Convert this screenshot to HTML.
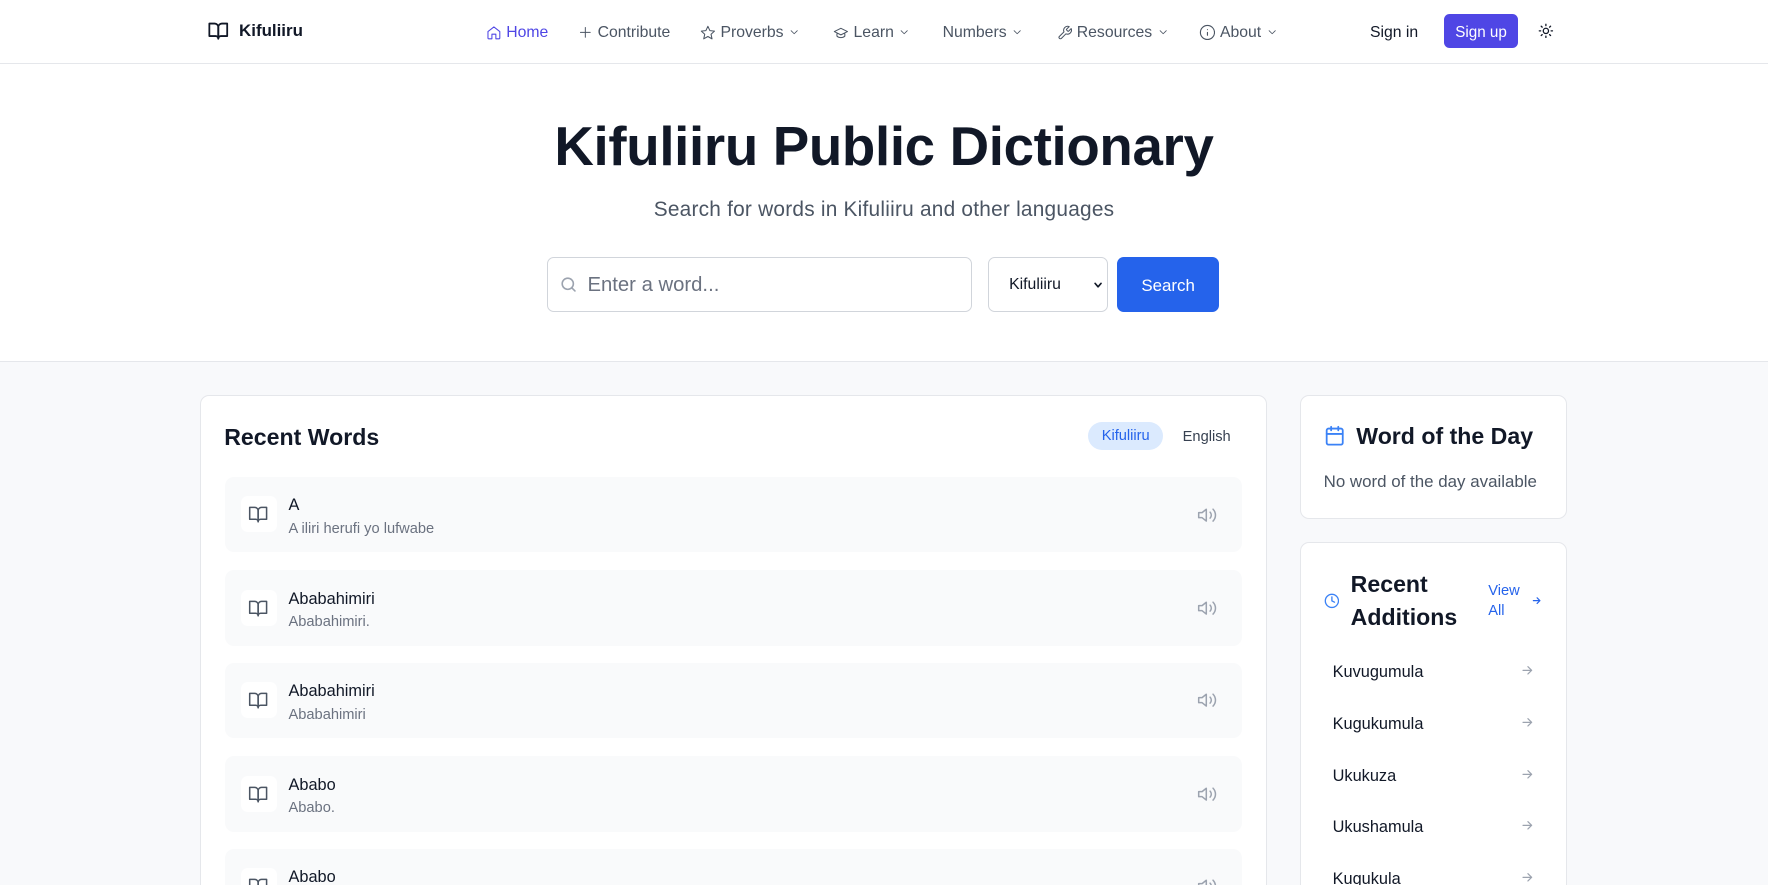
<!DOCTYPE html>
<html><head><meta charset="utf-8"><style>
*{box-sizing:border-box;margin:0;padding:0}
html,body{width:1768px;height:885px;overflow:hidden;background:#fff}
#root{zoom:1.12755;width:1568px;height:785px;position:relative;font-family:"Liberation Sans",sans-serif;color:#111827;background:#f8f9fb;overflow:hidden}
.abs{position:absolute}
nav{position:absolute;left:0;top:0;width:1568px;height:57px;background:#fff;border-bottom:1px solid #e5e7eb}
.nl{position:absolute;top:21px;font-size:14px;color:#4b5563;display:flex;align-items:center;gap:4px;white-space:nowrap}
.nl svg{stroke:currentColor;fill:none;stroke-width:1.6;stroke-linecap:round;stroke-linejoin:round}
.hero{position:absolute;left:0;top:57px;width:1568px;height:264px;background:#fff;border-bottom:1px solid #e5e7eb}
.card{position:absolute;background:#fff;border:1px solid #e5e7eb;border-radius:8px}
.row{position:absolute;left:22px;width:902px;height:67px;background:#f9fafb;border-radius:8px}
.ib{position:absolute;left:14px;top:17px;width:32px;height:32px;background:#fff;border-radius:6px}
.w{position:absolute;left:56px;top:17px;font-size:14.5px;color:#111827}
.s{position:absolute;left:56px;top:39px;font-size:13px;color:#6b7280}
.ra{position:absolute;left:28px;font-size:14.5px;color:#111827}
.arr{position:absolute;left:194px}
svg.ic{fill:none;stroke-linecap:round;stroke-linejoin:round}
</style></head><body><div id="root">
<nav>
 <svg class="abs ic" style="left:184px;top:18px" width="20" height="19" viewBox="0 0 24 24" stroke="#111827" stroke-width="2"><path d="M2 4h6a4 4 0 0 1 4 4v13a3 3 0 0 0-3-3H2z"/><path d="M22 4h-6a4 4 0 0 0-4 4v13a3 3 0 0 1 3-3h7z"/></svg>
 <div class="abs" style="left:212px;top:19px;font-size:15px;font-weight:bold">Kifuliiru</div>
 <div class="nl" style="left:431px;color:#4f46e5"><svg width="14" height="14" viewBox="0 0 24 24"><path d="M3 10l9-7 9 7v10a1 1 0 0 1-1 1h-5v-7H9v7H4a1 1 0 0 1-1-1z"/></svg>Home</div>
 <div class="nl" style="left:513px"><svg width="13" height="13" viewBox="0 0 24 24"><path d="M12 4v16M4 12h16"/></svg>Contribute</div>
 <div class="nl" style="left:621px"><svg width="14" height="14" viewBox="0 0 24 24"><path d="M12 2l3 6.5 7 .8-5.2 4.8 1.5 7L12 17.5 5.7 21l1.5-7L2 9.3l7-.8z"/></svg>Proverbs <svg width="11" height="11" viewBox="0 0 24 24"><path d="M6 9l6 6 6-6"/></svg></div>
 <div class="nl" style="left:739px"><svg width="14" height="14" viewBox="0 0 24 24"><path d="M22 10L12 5 2 10l10 5 10-5zM6 12v5c3 3 9 3 12 0v-5"/></svg>Learn <svg width="11" height="11" viewBox="0 0 24 24"><path d="M6 9l6 6 6-6"/></svg></div>
 <div class="nl" style="left:836px">Numbers <svg width="11" height="11" viewBox="0 0 24 24"><path d="M6 9l6 6 6-6"/></svg></div>
 <div class="nl" style="left:937px"><svg width="14" height="14" viewBox="0 0 24 24"><path d="M14.7 6.3a1 1 0 0 0 0 1.4l1.6 1.6a1 1 0 0 0 1.4 0l3.8-3.8a6 6 0 0 1-7.9 7.9l-6.9 6.9a2.1 2.1 0 0 1-3-3l6.9-6.9a6 6 0 0 1 7.9-7.9z"/></svg>Resources <svg width="11" height="11" viewBox="0 0 24 24"><path d="M6 9l6 6 6-6"/></svg></div>
 <div class="nl" style="left:1063px"><svg width="15" height="15" viewBox="0 0 24 24"><circle cx="12" cy="12" r="10"/><path d="M12 16v-4M12 8h0"/></svg>About <svg width="11" height="11" viewBox="0 0 24 24"><path d="M6 9l6 6 6-6"/></svg></div>
 <div class="abs" style="left:1215px;top:21px;font-size:14px;color:#111827">Sign in</div>
 <div class="abs" style="left:1281px;top:12px;width:65px;height:31px;background:#4f46e5;border-radius:5px;color:#fff;font-size:13.5px;text-align:center;line-height:33px">Sign up</div>
 <svg class="abs ic" style="left:1364px;top:20px" width="14" height="14" viewBox="0 0 24 24" stroke="#111827" stroke-width="2"><circle cx="12" cy="12" r="4"/><path d="M12 2v2M12 20v2M4.9 4.9l1.4 1.4M17.7 17.7l1.4 1.4M2 12h2M20 12h2M4.9 19.1l1.4-1.4M17.7 6.3l1.4-1.4"/></svg>
</nav>
<div class="hero">
 <div class="abs" style="left:0;width:1568px;top:44px;text-align:center;font-size:48.5px;font-weight:bold;letter-spacing:-0.3px;color:#111827">Kifuliiru Public Dictionary</div>
 <div class="abs" style="left:0;width:1568px;top:119px;text-align:center;font-size:18.5px;letter-spacing:0.2px;color:#4b5563">Search for words in Kifuliiru and other languages</div>
 <div class="abs" style="left:485px;top:171px;width:377px;height:49px;border:1px solid #d1d5db;border-radius:6px"></div>
 <svg class="abs ic" style="left:496px;top:187px" width="17" height="17" viewBox="0 0 24 24" stroke="#9ca3af" stroke-width="2"><circle cx="11" cy="11" r="7"/><path d="M20 20l-4-4"/></svg>
 <div class="abs" style="left:521px;top:186px;font-size:18px;color:#6b7280">Enter a word...</div>
 <div class="abs" style="left:876px;top:171px;width:107px;height:49px;border:1px solid #d1d5db;border-radius:6px"></div>
 <div class="abs" style="left:895px;top:188px;font-size:14px;color:#111827">Kifuliiru</div>
 <svg class="abs ic" style="left:969px;top:191px" width="9" height="9" viewBox="0 0 24 24" stroke="#111827" stroke-width="4"><path d="M5 8l7 8 7-8"/></svg>
 <div class="abs" style="left:991px;top:171px;width:90px;height:49px;background:#2563eb;border-radius:6px;color:#fff;font-size:15px;text-align:center;line-height:51px">Search</div>
</div>
<div class="card" style="left:177px;top:350px;width:947px;height:460px">
 <div class="abs" style="left:21px;top:25px;font-size:20.5px;font-weight:bold">Recent Words</div>
 <div class="abs" style="left:787px;top:23px;width:67px;height:25px;background:#dbeafe;border-radius:13px;color:#2563eb;font-size:13px;text-align:center;line-height:26px">Kifuliiru</div>
 <div class="abs" style="left:871px;top:30px;font-size:13px;color:#374151">English</div>
 <div class="row" style="top:72px"><div class="ib"></div><div class="w">A</div><div class="s">A iliri herufi yo lufwabe</div></div>
 <div class="row" style="top:155px"><div class="ib"></div><div class="w">Ababahimiri</div><div class="s">Ababahimiri.</div></div>
 <div class="row" style="top:237px"><div class="ib"></div><div class="w">Ababahimiri</div><div class="s">Ababahimiri</div></div>
 <div class="row" style="top:320px"><div class="ib"></div><div class="w">Ababo</div><div class="s">Ababo.</div></div>
 <div class="row" style="top:402px"><div class="ib"></div><div class="w">Ababo</div><div class="s"></div></div>
</div>
<svg width="0" height="0" style="position:absolute"><defs>
<symbol id="bk" viewBox="0 0 24 24"><path d="M2 4h6a4 4 0 0 1 4 4v13a3 3 0 0 0-3-3H2z"/><path d="M22 4h-6a4 4 0 0 0-4 4v13a3 3 0 0 1 3-3h7z"/></symbol>
<symbol id="spk" viewBox="0 0 24 24"><path d="M11 5L6 9H2v6h4l5 4z"/><path d="M15.5 8.5a5 5 0 0 1 0 7M19 5a10 10 0 0 1 0 14"/></symbol>
<symbol id="ar" viewBox="0 0 24 24"><path d="M5 12h14M13 6l6 6-6 6"/></symbol>
</defs></svg>
<div class="card" style="left:1153px;top:350px;width:237px;height:110px">
 <svg class="abs ic" style="left:20px;top:26px" width="19" height="19" viewBox="0 0 24 24" stroke="#3b82f6" stroke-width="2"><rect x="3" y="4" width="18" height="18" rx="2"/><path d="M16 2v4M8 2v4M3 10h18"/></svg>
 <div class="abs" style="left:49px;top:24px;font-size:20.5px;font-weight:bold">Word of the Day</div>
 <div class="abs" style="left:20px;top:68px;font-size:15px;color:#4b5563">No word of the day available</div>
</div>
<div class="card" style="left:1153px;top:481px;width:237px;height:340px">
 <svg class="abs ic" style="left:20px;top:44px" width="14" height="14" viewBox="0 0 24 24" stroke="#3b82f6" stroke-width="2"><circle cx="12" cy="12" r="10"/><path d="M12 6v6l4 2"/></svg>
 <div class="abs" style="left:44px;top:22px;font-size:20.5px;font-weight:bold;line-height:29px">Recent<br>Additions</div>
 <div class="abs" style="left:166px;top:33px;font-size:13px;color:#2563eb;line-height:18px">View<br>All</div>
 <svg class="abs ic" style="left:204px;top:46px" width="10" height="10" viewBox="0 0 24 24" stroke="#2563eb" stroke-width="2.5"><use href="#ar"/></svg>
 <div class="ra" style="top:106px">Kuvugumula</div>
 <div class="ra" style="top:152px">Kugukumula</div>
 <div class="ra" style="top:198px">Ukukuza</div>
 <div class="ra" style="top:244px">Ukushamula</div>
 <div class="ra" style="top:290px">Kugukula</div>
 <svg class="arr ic" style="top:106px" width="13" height="13" stroke="#9ca3af" stroke-width="2"><use href="#ar"/></svg>
 <svg class="arr ic" style="top:152px" width="13" height="13" stroke="#9ca3af" stroke-width="2"><use href="#ar"/></svg>
 <svg class="arr ic" style="top:198px" width="13" height="13" stroke="#9ca3af" stroke-width="2"><use href="#ar"/></svg>
 <svg class="arr ic" style="top:244px" width="13" height="13" stroke="#9ca3af" stroke-width="2"><use href="#ar"/></svg>
 <svg class="arr ic" style="top:290px" width="13" height="13" stroke="#9ca3af" stroke-width="2"><use href="#ar"/></svg>
</div>
<svg class="abs ic" style="left:220px;top:447px" width="18" height="18" stroke="#4b5563" stroke-width="1.8"><use href="#bk"/></svg>
<svg class="abs ic" style="left:220px;top:530px" width="18" height="18" stroke="#4b5563" stroke-width="1.8"><use href="#bk"/></svg>
<svg class="abs ic" style="left:220px;top:612px" width="18" height="18" stroke="#4b5563" stroke-width="1.8"><use href="#bk"/></svg>
<svg class="abs ic" style="left:220px;top:695px" width="18" height="18" stroke="#4b5563" stroke-width="1.8"><use href="#bk"/></svg>
<svg class="abs ic" style="left:220px;top:777px" width="18" height="18" stroke="#4b5563" stroke-width="1.8"><use href="#bk"/></svg>
<svg class="abs ic" style="left:1062px;top:448px" width="18" height="18" stroke="#9ca3af" stroke-width="1.8"><use href="#spk"/></svg>
<svg class="abs ic" style="left:1062px;top:530px" width="18" height="18" stroke="#9ca3af" stroke-width="1.8"><use href="#spk"/></svg>
<svg class="abs ic" style="left:1062px;top:612px" width="18" height="18" stroke="#9ca3af" stroke-width="1.8"><use href="#spk"/></svg>
<svg class="abs ic" style="left:1062px;top:695px" width="18" height="18" stroke="#9ca3af" stroke-width="1.8"><use href="#spk"/></svg>
<svg class="abs ic" style="left:1062px;top:777px" width="18" height="18" stroke="#9ca3af" stroke-width="1.8"><use href="#spk"/></svg>
</div></body></html>
